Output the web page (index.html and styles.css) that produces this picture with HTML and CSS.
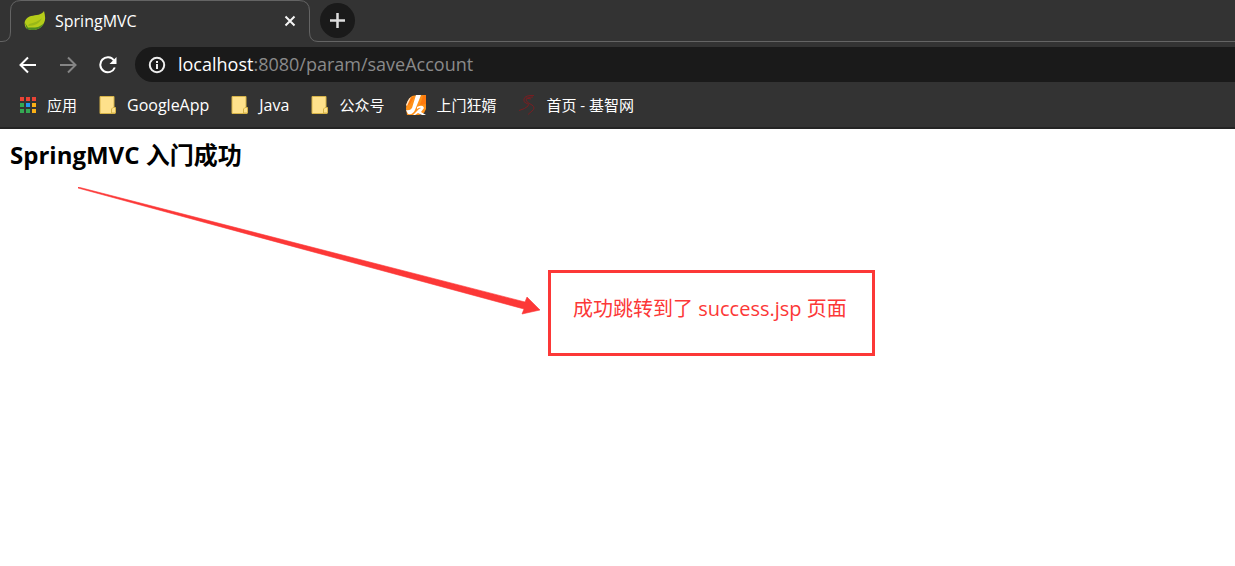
FILE: index.html
```html
<!DOCTYPE html>
<html lang="zh-CN">
<head>
<meta charset="utf-8">
<title>SpringMVC</title>
<link rel="stylesheet" href="styles.css">
</head>
<body>
<header class="browser">
  <div class="tabstrip">
    <div class="tab">
      <svg class="tab-outline" width="320" height="42" viewBox="0 0 320 42" fill="none" stroke="#646464"><path d="M0 41.500H2Q10.500 41.500 10.500 32V11Q10.500 .500 21 .500H299Q309.500 .500 309.500 11V32Q309.500 41.500 318 41.500H320"/></svg>
      <svg class="favicon" width="22" height="22" viewBox="0 0 22 22"><path d="M20 1C18 5 12 5 7 6C1 8-1 13 2 18C8 22 17 20 20 13C22 9 21 5 20 1Z" fill="#b5cc19"/><path d="M2 18C8 22 17 20 20 13C19 14 17 16 14 17C10 18 6 17 2 18Z" fill="#4d8c22"/><path d="M4 16C11 16 16 13 18 8C15 11 10 13 5 14Z" fill="#98b818"/><path d="M1 13L3 19L5 20L3 16Z" fill="#417c25"/></svg>
      <span class="tab-title">SpringMVC</span>
      <button class="icon-button close" aria-label="关闭"><svg width="12" height="12" viewBox="0 0 12 12" stroke="#f5f5f5" stroke-width="2"><path d="M1.500 1.500L10.500 10.500M10.500 1.500L1.500 10.500"/></svg></button>
    </div>
    <button class="icon-button new-tab" aria-label="新标签页"><svg width="15" height="15" viewBox="0 0 15 15" stroke="#dedede" stroke-width="2.500"><path d="M7.500 0V15M0 7.500H15"/></svg></button>
  </div>
  <div class="toolbar">
    <button class="icon-button nav" aria-label="后退"><svg width="18" height="18" viewBox="0 0 18 18" fill="none" stroke="#fff" stroke-width="2"><path d="M17 9H2M9 1.500L1.500 9L9 16.500"/></svg></button>
    <button class="icon-button nav" aria-label="前进"><svg width="18" height="18" viewBox="0 0 18 18" fill="none" stroke="#858585" stroke-width="2"><path d="M1 9H16M9 1.500L16.500 9L9 16.500"/></svg></button>
    <button class="icon-button nav" aria-label="重新加载"><svg width="18" height="18" viewBox="0 0 18 18" fill="none"><path d="M15 4.500A7.500 7.500 0 1 0 15.800 11.500" stroke="#fff" stroke-width="2"/><path d="M17.500 1V8H10.500Z" fill="#fff"/></svg></button>
    <div class="address">
      <svg width="18" height="18" viewBox="0 0 18 18" fill="none" stroke="#eee" stroke-width="2"><circle cx="9" cy="9" r="7.200"/><path d="M9 8V13M9 5V7"/></svg>
      <span class="url"><span class="host">localhost</span>:8080/param/saveAccount</span>
    </div>
  </div>
  <nav class="bookmarks">
    <a class="bookmark" href="#"><svg width="18" height="18" viewBox="0 0 18 18"><path d="M1 1h4v4H1zM7 1h4v4H7zM13 1h4v4h-4z" fill="#ea4335"/><path d="M1 7h4v4H1zM1 13h4v4H1z" fill="#34a853"/><path d="M7 7h4v4H7z" fill="#2196f3"/><path d="M7 13h4v4H7z" fill="#34a853"/><path d="M13 7h4v4h-4zM13 13h4v4h-4z" fill="#fbb016"/></svg>应用</a>
    <a class="bookmark latin" href="#"><svg width="18" height="20" viewBox="0 0 18 20"><path d="M1 1.500H15V13L16 14V18.500H1Z" fill="#fee18b" stroke="#d6b348"/><path d="M12.500 18V14L14 12.500H16.500V18Z" fill="#fee18b" stroke="#d6b348"/></svg>GoogleApp</a>
    <a class="bookmark latin" href="#"><svg width="18" height="20" viewBox="0 0 18 20"><path d="M1 1.500H15V13L16 14V18.500H1Z" fill="#fee18b" stroke="#d6b348"/><path d="M12.500 18V14L14 12.500H16.500V18Z" fill="#fee18b" stroke="#d6b348"/></svg>Java</a>
    <a class="bookmark" href="#"><svg width="18" height="20" viewBox="0 0 18 20"><path d="M1 1.500H15V13L16 14V18.500H1Z" fill="#fee18b" stroke="#d6b348"/><path d="M12.500 18V14L14 12.500H16.500V18Z" fill="#fee18b" stroke="#d6b348"/></svg>公众号</a>
    <a class="bookmark" href="#"><svg width="20" height="20" viewBox="0 0 20 20"><path d="M6 1Q10 0 20 0V14L18 18L13 20H1L0 14Q0 5 6 1Z" fill="#ff9118"/><path d="M10 0H15L9 15Q7 20 2 19L0 15Q4 16 6 13ZM11 12Q17 9 18 13L15 17L20 20H16L12 18L9 20H7L13 14L15 13Q14 12 11 14Z" fill="#fff"/><path d="M5 3L8 2L4 9L1 11ZM17 1L20 0V9L14 10Z" fill="#ff790d"/><path d="M5 2L1 11L0 10Q2 4 5 2Z" fill="#ffe5c7"/></svg>上门狂婿</a>
    <a class="bookmark" href="#"><svg width="18" height="20" viewBox="0 0 18 20" fill="none" stroke="#781e22"><path d="M16 .500Q7 0 6 4Q5 7 8 8Q12 9 10 11Q7 14 1 15.500M15 2Q9 2 8 5Q9 8 14 10Q18 13 14 16L10 19.500M8 3L13 4"/></svg>首页 - 基智网</a>
  </nav>
</header>
<main class="page">
  <h3 class="heading">SpringMVC 入门成功</h3>
  <div class="annotation">
    <svg width="462" height="128" viewBox="0 0 462 128"><path d="M0 0L447 115L449 110L462 123L444 127L446 122Q220 61 0 1Z" fill="#fc3837" stroke="#fc3837" stroke-width=".6"/></svg>
    <p class="note">成功跳转到了 success.jsp 页面</p>
  </div>
</main>
</body>
</html>
```
FILE: styles.css
```css
* { box-sizing: border-box; }
body {
  margin: 0;
  background: #fff;
  font-family: "Open Sans", "Noto Sans CJK SC", sans-serif;
}
svg { display: block; flex: none; }
.browser {
  background: #333;
  color: #fff;
  border-bottom: 2px solid #242424;
  overflow: hidden;
}
.tabstrip {
  display: flex;
  height: 42px;
  background: linear-gradient(#646464, #646464) 320px 41px / 100% 1px no-repeat;
}
.tab {
  position: relative;
  display: flex;
  align-items: center;
  width: 320px;
  padding: 0 24px;
}
.tab-outline { position: absolute; left: 0; top: 0; }
.tab-title { margin-left: 9px; font-size: 16px; }
.icon-button {
  display: flex;
  align-items: center;
  justify-content: center;
  padding: 0;
  border: 0;
  background: none;
}
.close { margin-left: auto; }
.new-tab {
  width: 35px;
  height: 35px;
  margin-top: 3px;
  border-radius: 50%;
  background: #1a1a1a;
}
.toolbar {
  display: flex;
  align-items: center;
  height: 45px;
  padding: 5px 0 5px 8px;
}
.nav { width: 40px; height: 35px; }
.address {
  display: flex;
  flex: 1;
  align-items: center;
  gap: 12px;
  height: 35px;
  margin-left: 7px;
  padding-left: 13px;
  border-radius: 18px 0 0 18px;
  background: #1a1a1a;
}
.url {
  padding-bottom: 2px;
  color: #8a8a8a;
  font-size: 18px;
  line-height: 24px;
}
.host { color: #fff; }
.bookmarks {
  display: flex;
  align-items: center;
  gap: 22px;
  height: 40px;
  padding: 0 19px 4px;
}
.bookmark {
  display: flex;
  align-items: center;
  gap: 10px;
  color: #fff;
  font-size: 15px;
  line-height: 22px;
  text-decoration: none;
  white-space: nowrap;
}
.latin { font-size: 16px; }
.page { padding: 10px; }
.heading { margin: 0; font-size: 24px; line-height: 32px; }
.annotation {
  display: flex;
  align-items: flex-start;
  gap: 8px;
  padding: 16px 0 0 68px;
}
.note {
  margin: 83px 0 0;
  padding: 21px 25px 29px 22px;
  border: 3px solid #fc3837;
  color: #fc3837;
  font-size: 20px;
  line-height: 30px;
  white-space: nowrap;
}
```
